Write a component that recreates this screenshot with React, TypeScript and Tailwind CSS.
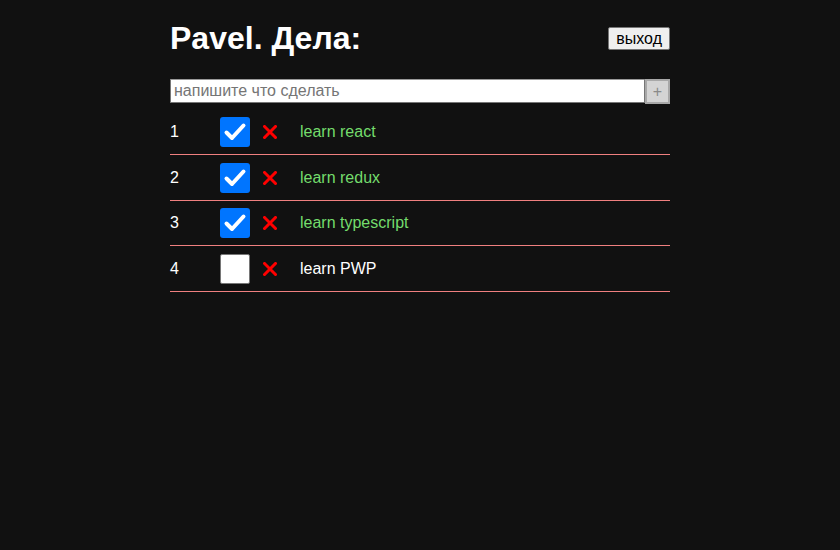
import React from "react";

const todos = [
  { id: 1, title: "learn react", done: true, h: "h-[46px]" },
  { id: 2, title: "learn redux", done: true, h: "h-[46px]" },
  { id: 3, title: "learn typescript", done: true, h: "h-[45px]" },
  { id: 4, title: "learn PWP", done: false, h: "h-[46px]" },
];

function Check({ done }: { done: boolean }) {
  if (done) {
    return (
      <div className="w-[30px] h-[30px] rounded-[3px] bg-[#0075ff] flex items-center justify-center shrink-0">
        <svg width="30" height="30" viewBox="0 0 30 30">
          <path d="M6.5 15.5 L12 21 L23.5 8.5" fill="none" stroke="#fff" strokeWidth="4" strokeLinecap="round" strokeLinejoin="round" />
        </svg>
      </div>
    );
  }
  return <div className="w-[30px] h-[30px] rounded-[2px] bg-white border-[1.5px] border-[#767676] shrink-0" />;
}

function Cross() {
  return (
    <svg width="14" height="14" viewBox="0 0 14 14" className="ml-[13px] shrink-0">
      <path d="M1.5 1.5 L12.5 12.5 M12.5 1.5 L1.5 12.5" stroke="#ff0000" strokeWidth="3" strokeLinecap="square" />
    </svg>
  );
}

export default function App() {
  return (
    <div className="min-h-screen w-full bg-[#111111] text-white" style={{ fontFamily: '"Liberation Sans", Arial, sans-serif' }}>
      <div className="w-[500px] mx-auto pt-[20px]">
        <div className="flex items-center justify-between h-[37px]">
          <h1 className="text-[32px] leading-[37px] font-bold text-white">Pavel. Дела:</h1>
          <button className="h-[23px] px-[7px] bg-[#efefef] border border-[#767676] rounded-[2px] text-black text-[16px] leading-[18px] font-normal">
            выход
          </button>
        </div>
        <div className="flex mt-[22px] items-start h-[25px]">
          <input
            className="w-[475px] h-[24px] bg-white border border-[#767676] border-t-[#999] px-[3px] text-[16px] text-black placeholder:text-[#757575] outline-none"
            placeholder="напишите что сделать"
          />
          <button className="w-[25px] h-[25px] bg-[#d4d4d4] border-2 border-[#a8a8a8] text-[#8a8a8a] text-[16px] leading-[18px] font-normal flex items-center justify-center">
            +
          </button>
        </div>
        <div className="mt-[5px]">
          {todos.map((t) => (
            <div key={t.id} className={"flex items-center border-b border-[#f08080] text-[16px] " + t.h}>
              <div className="w-[50px] shrink-0 text-white">{t.id}</div>
              <Check done={t.done} />
              <Cross />
              <div className={"ml-[23px] " + (t.done ? "text-[#74dc6c]" : "text-white")}>{t.title}</div>
            </div>
          ))}
        </div>
      </div>
    </div>
  );
}
